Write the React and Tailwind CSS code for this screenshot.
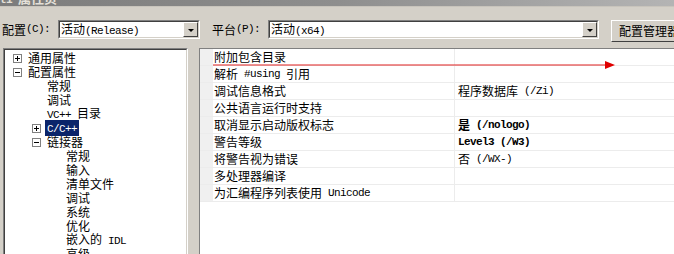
import React from 'react';

const cjk = "font-['Noto_Sans_CJK_SC','Noto_Sans',sans-serif]";

// split mixed text so Latin runs use a half-width mono face like SimSun
const T = ({ text }) => {
  const parts = text.split(/([\x00-\xff]+)/).filter(Boolean);
  return (
    <>
      {parts.map((p, i) =>
        /^[\x00-\xff]+$/.test(p) ? (
          <span key={i} className="font-['Liberation_Mono','DejaVu_Sans_Mono',monospace] text-[11px] tracking-[-0.6px] whitespace-pre">
            {p}
          </span>
        ) : (
          <span key={i}>{p}</span>
        )
      )}
    </>
  );
};

const Arrow = () => (
  <svg width="10" height="8" viewBox="0 0 10 8" className="block">
    <path d="M2 3 L8 3 L5 6 Z" fill="#000" />
  </svg>
);

const Select = ({ width, value }) => (
  <div
    className={`${width} shrink-0 h-[19px] flex items-stretch bg-white border border-t-[#808080] border-l-[#808080] border-b-white border-r-white`}
  >
    <div className="flex-1 flex items-center border border-t-[#404040] border-l-[#404040] border-b-[#d4d0c8] border-r-[#d4d0c8] pl-[1px]">
      <div className="flex-1 text-[12px] leading-none text-black whitespace-nowrap">
        <T text={value} />
      </div>
      <div className="w-[15px] h-full bg-[#d4d0c8] flex items-center justify-center border border-t-white border-l-white border-b-[#404040] border-r-[#404040]">
        <Arrow />
      </div>
    </div>
  </div>
);

const Box = ({ sign }) => (
  <div className="w-[9px] h-[9px] border border-[#808080] bg-white relative shrink-0">
    <div className="absolute left-[1px] top-[3px] w-[5px] h-[1px] bg-black" />
    {sign === '+' && <div className="absolute left-[3px] top-[1px] w-[1px] h-[5px] bg-black" />}
  </div>
);

const tree = [
  { label: '通用属性', box: '+', pad: 'pl-[8px]' },
  { label: '配置属性', box: '-', pad: 'pl-[8px]' },
  { label: '常规', pad: 'pl-[40px]' },
  { label: '调试', pad: 'pl-[40px]' },
  { label: 'VC++ 目录', pad: 'pl-[40px]' },
  { label: 'C/C++', box: '+', pad: 'pl-[27px]', selected: true },
  { label: '链接器', box: '-', pad: 'pl-[27px]' },
  { label: '常规', pad: 'pl-[59px]' },
  { label: '输入', pad: 'pl-[59px]' },
  { label: '清单文件', pad: 'pl-[59px]' },
  { label: '调试', pad: 'pl-[59px]' },
  { label: '系统', pad: 'pl-[59px]' },
  { label: '优化', pad: 'pl-[59px]' },
  { label: '嵌入的 IDL', pad: 'pl-[59px]' },
  { label: '高级', pad: 'pl-[59px]' },
];

const props = [
  { name: '附加包含目录', value: '' },
  { name: '解析 #using 引用', value: '' },
  { name: '调试信息格式', value: '程序数据库 (/Zi)' },
  { name: '公共语言运行时支持', value: '' },
  { name: '取消显示启动版权标志', value: '是 (/nologo)', bold: true },
  { name: '警告等级', value: 'Level3 (/W3)', bold: true },
  { name: '将警告视为错误', value: '否 (/WX-)' },
  { name: '多处理器编译', value: '' },
  { name: '为汇编程序列表使用 Unicode', value: '' },
];

export default function App() {
  return (
    <div className={`w-[674px] h-[254px] overflow-hidden bg-[#d4d0c8] text-black ${cjk}`}>
      {/* title bar, mostly scrolled off */}
      <div className="h-[7px] overflow-hidden bg-gradient-to-r from-[#7c7c7c] via-[#8e8e8e] to-[#b4b4b4] border-b border-[#c8c4bc]">
        <div className="-mt-[9px] text-[13px] font-bold leading-[14px] text-[#e4e0d8] whitespace-nowrap">
          <T text="t1 属性页" />
        </div>
      </div>

      {/* configuration / platform row */}
      <div className="flex items-start pt-[13px] h-[41px] overflow-hidden">
        <div className="ml-[2px] w-[56px] shrink-0 h-[19px] flex items-center text-[12px] leading-none whitespace-nowrap">
          <T text="配置(C):" />
        </div>
        <Select width="w-[142px]" value="活动(Release)" />
        <div className="ml-[12px] w-[56px] shrink-0 h-[19px] flex items-center text-[12px] leading-none whitespace-nowrap">
          <T text="平台(P):" />
        </div>
        <Select width="w-[331px]" value="活动(x64)" />
        <div className="ml-[12px] h-[22px] w-[90px] shrink-0 flex items-center pl-[7px] text-[12px] leading-none border border-t-white border-l-white border-b-[#404040] border-r-[#404040] whitespace-nowrap">
          配置管理器(O)...
        </div>
      </div>

      {/* panels */}
      <div className="flex h-[206px]">
        {/* tree */}
        <div className="ml-[3px] w-[185px] shrink-0 h-[220px] bg-white border border-t-[#808080] border-l-[#808080] border-r-white border-b-white">
          <div className="h-full border border-t-[#404040] border-l-[#404040] border-r-[#d4d0c8] border-b-[#d4d0c8] pt-[1px] text-[12px]">
            {tree.map((n, i) => (
              <div key={i} className={`h-[14px] flex items-center ${n.pad}`}>
                {n.box && <Box sign={n.box} />}
                <span
                  className={`${n.box ? 'ml-[4px]' : ''} px-[2px] leading-[14px] whitespace-nowrap ${
                    n.selected ? 'bg-[#0a246a] text-white' : ''
                  }`}
                >
                  <T text={n.label} />
                </span>
              </div>
            ))}
          </div>
        </div>

        {/* property grid */}
        <div className="ml-[11px] flex-1 h-[220px] bg-white border-l border-t border-[#808080] relative">
          <div className="text-[12px]">
            {props.map((p, i) => (
              <div key={i} className="h-[17px] flex border-b border-[#ececec]">
                <div className="w-[13px] bg-[#f0f0f0] shrink-0" />
                <div className="w-[242px] shrink-0 pl-[1px] flex items-center leading-none whitespace-nowrap border-r border-[#ececec]">
                  <T text={p.name} />
                </div>
                <div className={`flex-1 pl-[3px] flex items-center leading-none whitespace-nowrap ${p.bold ? 'font-bold' : ''}`}>
                  <T text={p.value} />
                </div>
              </div>
            ))}
          </div>
          {/* red annotation arrow */}
          <svg className="absolute left-[13px] top-[11px]" width="404" height="10" viewBox="0 0 404 10">
            <line x1="0" y1="5" x2="394" y2="5" stroke="#e02020" strokeWidth="1.2" />
            <path d="M392 1 L402 5 L392 9 Z" fill="#e00000" />
          </svg>
        </div>
      </div>
    </div>
  );
}
